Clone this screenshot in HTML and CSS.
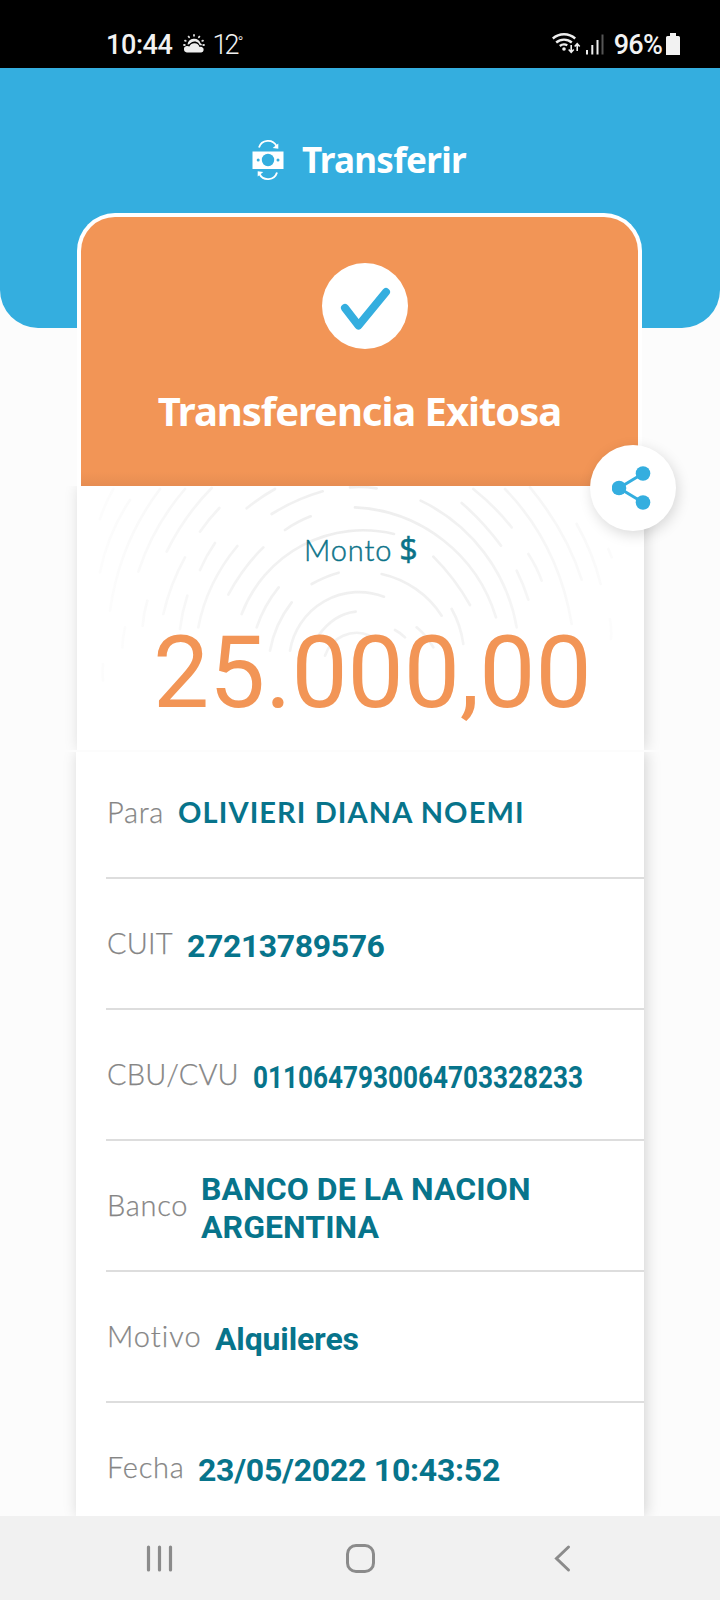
FILE: index.html
```html
<!DOCTYPE html>
<html lang="es">
<head>
<meta charset="utf-8">
<title>Transferir</title>
<link rel="stylesheet" href="styles.css">
</head>
<body>
<div class="screen">
  <div class="status">
    <div class="status-left">
      <span class="clock">10:44</span>
      <svg class="weather" width="22" height="20" viewBox="0 0 22 20" fill="#eee">
        <g stroke="#ddd" stroke-width="1.8" stroke-linecap="round"><path d="M11 1v.8M5.6 2.6l.5.7M16.4 2.6l-.5.7M2 6.600l.7.3M20 6.600l-.7.3M1 11h.8M20.200 11h.8"/></g>
        <path d="M4.500 10.500a6.700 6.700 0 0 1 13-1.200q1.500 .7 1.500 2l-2.200 0a5.600 5.600 0 0 0-9.500-2q-1.300 1.400-2.800 1.200z"/>
        <path d="M3.800 18.500a3.300 3.300 0 0 1-.2-6.500q1.500-.2 2.800.5a5.500 5.500 0 0 1 10.200.6q1.100-.5 2.300 0a2.800 2.800 0 0 1-.7 5.400z"/>
      </svg>
      <span class="temp">12<span class="deg">°</span></span>
    </div>
    <div class="status-right">
      <svg width="54" height="24" viewBox="0 0 54 24" fill="none" stroke="#eee" stroke-width="2.400">
        <path d="M.8 6.500a17 17 0 0 1 22.400 0M4.200 10.500a12 12 0 0 1 15.600 0M7.800 14a6.800 6.800 0 0 1 7.500-.7"/>
        <circle cx="12" cy="17" r="1.800" fill="#eee" stroke="none"/>
        <path stroke-width="1.600" d="M19.200 13v7M16.700 17.500l2.500 2.800 2.500-2.800M25.200 19v-7M22.700 14.500l2.500-2.800 2.500 2.800"/>
        <path stroke-width="2" d="M35 18v4.500M40.300 13v9.500M45.500 8v14.500"/><path stroke="#555" stroke-width="2" d="M50.500 2.500v20"/>
      </svg>
      <span class="percent">96%</span>
      <svg width="14" height="22" viewBox="0 0 14 22" fill="#f2f2f2"><path d="M4 0h6v3h2.500q1.500 0 1.500 1.500V22H0V4.500Q0 3 1.500 3H4z"/></svg>
    </div>
  </div>

  <header class="header">
    <svg class="money" width="34" height="42" viewBox="0 0 34 42">
      <path fill="#fff" d="M1.500 12.500h31v17.500h-31z"/>
      <circle cx="17" cy="21" r="6.200" fill="#34aedf"/><circle cx="7.200" cy="21" r="1.500" fill="#34aedf"/><circle cx="27" cy="21" r="1.500" fill="#34aedf"/>
      <g fill="none" stroke="#fff" stroke-width="1.900"><path d="M8 8.500A9.500 9.500 0 0 1 25.500 7"/><path d="M26 33.500A9.500 9.500 0 0 1 8.500 35"/></g>
      <path fill="#fff" d="M27.300 4.500v5.200l-5.600-.8zM6.700 37.500v-5.200l5.600.8z"/>
    </svg>
    <h1>Transferir</h1>
  </header>

  <main class="receipt">
    <section class="success">
      <svg class="check" width="86" height="86" viewBox="0 0 86 86"><circle cx="43" cy="43" r="43" fill="#fff"/><path d="M23 45 36.500 62.500 64 29" fill="none" stroke="#34aedf" stroke-width="8" stroke-linecap="round" stroke-linejoin="round"/></svg>
      <h2>Transferencia Exitosa</h2>
    </section>
    <button class="share" aria-label="Compartir">
      <svg width="42" height="46" viewBox="0 0 42 46"><path d="M31 8.500 7 23l24 14.500" fill="none" stroke="#34aedf" stroke-width="3"/><g fill="#34aedf"><circle cx="31" cy="8.500" r="7.300"/><circle cx="7" cy="23" r="7.300"/><circle cx="31" cy="37.500" r="7.300"/></g></svg>
    </button>
    <section class="amount">
      <svg class="rings" width="566" height="262" viewBox="21 46 1698 786">
        <defs><radialGradient id="fade" gradientUnits="userSpaceOnUse" cx="880" cy="200" r="780"><stop offset="0" stop-color="#ededed"/><stop offset=".5" stop-color="#f3f3f3"/><stop offset="1" stop-color="#fcfcfc"/></radialGradient></defs>
        <g fill="none" stroke="url(#fade)" stroke-width="8" stroke-linecap="round">
          <path d="M90 145Q105 98 130 55M90 305Q113 188 180 88M120 420Q149 215 270 55M205 303Q250 165 345 55M290 243Q343 135 425 52M390 183Q417 144 448 112M530 113Q570 80 615 55M605 130Q678 85 758 62M645 178Q683 152 722 137M840 50Q880 47 920 53"/>
          <path d="M855 110A465 465 0 0 1 1278 440M515 430A390 390 0 0 1 972 190M475 372Q518 291 580 230M390 298Q409 254 435 217M385 470Q410 337 502 226M280 430Q301 339 345 260M218 465Q221 426 232 390M330 475Q336 424 352 375M560 470Q582 404 626 350M600 540Q614 461 665 395"/>
          <path d="M660 540A210 210 0 0 1 942 378M725 340Q766 317 806 306M745 495Q792 430 857 423M765 555A100 100 0 0 1 900 495M935 310A290 290 0 0 1 1115 435M975 478Q992 487 1005 500"/>
          <path d="M157 530Q158 500 165 470M99 630Q96 605 99 580"/>
          <path d="M1052 90A520 520 0 0 1 1340 470M1090 258Q1155 323 1200 403M1175 97Q1238 151 1293 225M1210 55Q1276 108 1325 170M1305 55Q1465 220 1505 460M1380 50Q1490 184 1535 327M1375 250Q1401 290 1415 330M1340 300Q1361 342 1375 387M1520 160Q1568 245 1592 340M1615 235L1625 260M1620 445Q1625 475 1623 505M1145 415Q1172 463 1180 520M1040 470Q1070 495 1090 530"/>
        </g>
      </svg>
      <p class="caption">Monto <b>$</b></p>
      <p class="total">25.000,00</p>
    </section>
    <section class="details">
      <div class="row"><span class="label l-para">Para</span><strong class="value name">OLIVIERI DIANA NOEMI</strong></div>
      <div class="row"><span class="label l-cuit">CUIT</span><strong class="value cuit">27213789576</strong></div>
      <div class="row"><span class="label l-cbu">CBU/CVU</span><strong class="value cbu">0110647930064703328233</strong></div>
      <div class="row"><span class="label l-banco">Banco</span><strong class="value banco">BANCO DE LA NACION<br>ARGENTINA</strong></div>
      <div class="row"><span class="label l-motivo">Motivo</span><strong class="value motivo">Alquileres</strong></div>
      <div class="row"><span class="label l-fecha">Fecha</span><strong class="value fecha">23/05/2022 10:43:52</strong></div>
    </section>
  </main>

  <nav class="nav">
    <svg width="32" height="32" viewBox="0 0 32 32" stroke="#8b8b8b" stroke-width="3.200" stroke-linecap="round"><path d="M5.500 5v23M16.500 5v23M27.500 5v23"/></svg>
    <svg width="32" height="32" viewBox="0 0 32 32" fill="none" stroke="#8b8b8b" stroke-width="3"><rect x="1.500" y="3.500" width="26" height="26" rx="8.500"/></svg>
    <svg width="32" height="32" viewBox="0 0 32 32" fill="none" stroke="#8b8b8b" stroke-width="3" stroke-linecap="round"><path d="M20.500 5 8.500 16.500 20.500 28"/></svg>
  </nav>
</div>
</body>
</html>
```
FILE: styles.css
```css
* { box-sizing: border-box; }
body, h1, h2, p { margin: 0; }
.screen {
  width: 720px;
  height: 1600px;
  display: flex;
  flex-direction: column;
  overflow: hidden;
  background: #fcfcfc;
  font-family: Roboto, "Noto Sans", sans-serif;
}
.status {
  height: 68px;
  flex: none;
  background: #000;
  color: #f2f2f2;
  display: flex;
  justify-content: space-between;
  padding: 23px 40px 0 106px;
}
.status-left, .status-right { display: flex; align-items: center; height: 44px; }
.status-right svg { margin-top: -2px; }
.clock { font-size: 27px; font-weight: 500; letter-spacing: -0.4px; }
.weather { margin: -2px 8px 0 10px; }
.temp { font-size: 27px; font-weight: 300; letter-spacing: -3px; }
.deg { font-size: 16px; vertical-align: 6px; margin-left: 1px; }
.percent { font-size: 27px; font-weight: 500; margin: 0 4px 0 8px; letter-spacing: -0.8px; }
.header {
  height: 260px;
  flex: none;
  background: #34aedf;
  border-radius: 0 0 38px 38px;
  display: flex;
  align-items: flex-start;
  padding: 70px 0 0 251px;
  color: #fff;
}
.money { margin-top: 1px; }
.header h1 {
  margin-left: 17px;
  font: 700 35px/44px "Noto Sans", sans-serif;
  letter-spacing: -0.7px;
}
.receipt {
  position: relative;
  flex: 1;
  min-height: 0;
  margin: -115px 76px 0 76px;
  display: flex;
  flex-direction: column;
}
.success {
  height: 273px;
  flex: none;
  margin: 0 2px 0 1px;
  border: 4px solid #fff;
  border-bottom: 0;
  border-radius: 38px 38px 0 0;
  background: linear-gradient(#f29556 0 255px, #e68d52 269px);
  display: flex;
  flex-direction: column;
  align-items: center;
  color: #fff;
}
.check { margin: 46px 0 0 11px; }
.success h2 {
  margin-top: 34px;
  font: 700 40px/56px "Noto Sans", sans-serif;
  letter-spacing: -1.05px;
  white-space: nowrap;
}
.share {
  position: absolute;
  z-index: 2;
  left: 514px;
  top: 232px;
  width: 86px;
  height: 86px;
  padding: 0;
  border: 0;
  border-radius: 50%;
  background: #fff;
  box-shadow: 2px 4px 14px rgba(0, 0, 0, .15);
  display: grid;
  place-items: center;
}
.amount {
  position: relative;
  height: 264px;
  flex: none;
  margin: 0 0 2px 1px;
  background: #fff;
  box-shadow: 2px 0 14px rgba(0, 0, 0, .15);
  clip-path: inset(0 -30px 0 -30px);
}
.rings { position: absolute; left: 0; top: 0; }
.caption {
  position: relative;
  padding: 45px 0 0 227px;
  font: 300 29px/36px Lato, sans-serif;
  letter-spacing: .9px;
  -webkit-text-stroke: .45px #0b7389;
  color: #0b7389;
}
.caption b { margin-left: -2px; font-family: "Noto Sans", sans-serif; font-size: 32px; }
.total {
  position: relative;
  padding: 47px 0 0 76px;
  font-size: 100px;
  line-height: 116px;
  letter-spacing: -0.1px;
  color: #f29556;
  white-space: nowrap;
}
.details {
  flex: 1;
  min-height: 0;
  padding: 0 0 0 30px;
  background: #fff;
  box-shadow: 2px 0 14px rgba(0, 0, 0, .17);
  clip-path: inset(0 -30px 0 -30px);
}
.row {
  height: 131px;
  display: flex;
  align-items: center;
  border-bottom: 2px solid #ddd;
}
.row:first-child { height: 127px; padding-bottom: 4px; }
.row:last-child { border-bottom-color: transparent; }
.label {
  flex: none;
  font: 300 29px/36px Lato, sans-serif;
  letter-spacing: .7px;
  -webkit-text-stroke: .25px #858585;
  color: #858585;
  padding: 0 0 1px 1px;
}
.l-para { width: 72px; }
.l-cuit { width: 81px; letter-spacing: .2px; }
.l-cbu { width: 147px; letter-spacing: .1px; }
.l-banco { width: 95px; }
.l-motivo { width: 109px; letter-spacing: 1px; }
.l-fecha { width: 92px; }
.value {
  font-size: 32px;
  font-weight: 700;
  line-height: 38px;
  color: #07748b;
  white-space: nowrap;
  padding-top: 4px;
}
.name { font: 700 29px/36px Lato, sans-serif; letter-spacing: 1.1px; padding: 0 0 1px; }
.cuit { letter-spacing: -0.4px; }
.cbu { transform: scaleX(.817); transform-origin: 0 50%; }
.banco { letter-spacing: .07px; }
.motivo { letter-spacing: -0.15px; }
.fecha { letter-spacing: -0.25px; }
.nav {
  height: 84px;
  flex: none;
  background: #f1f1f1;
  display: flex;
  justify-content: space-between;
  align-items: center;
  padding: 0 140px 0 143px;
}
```
